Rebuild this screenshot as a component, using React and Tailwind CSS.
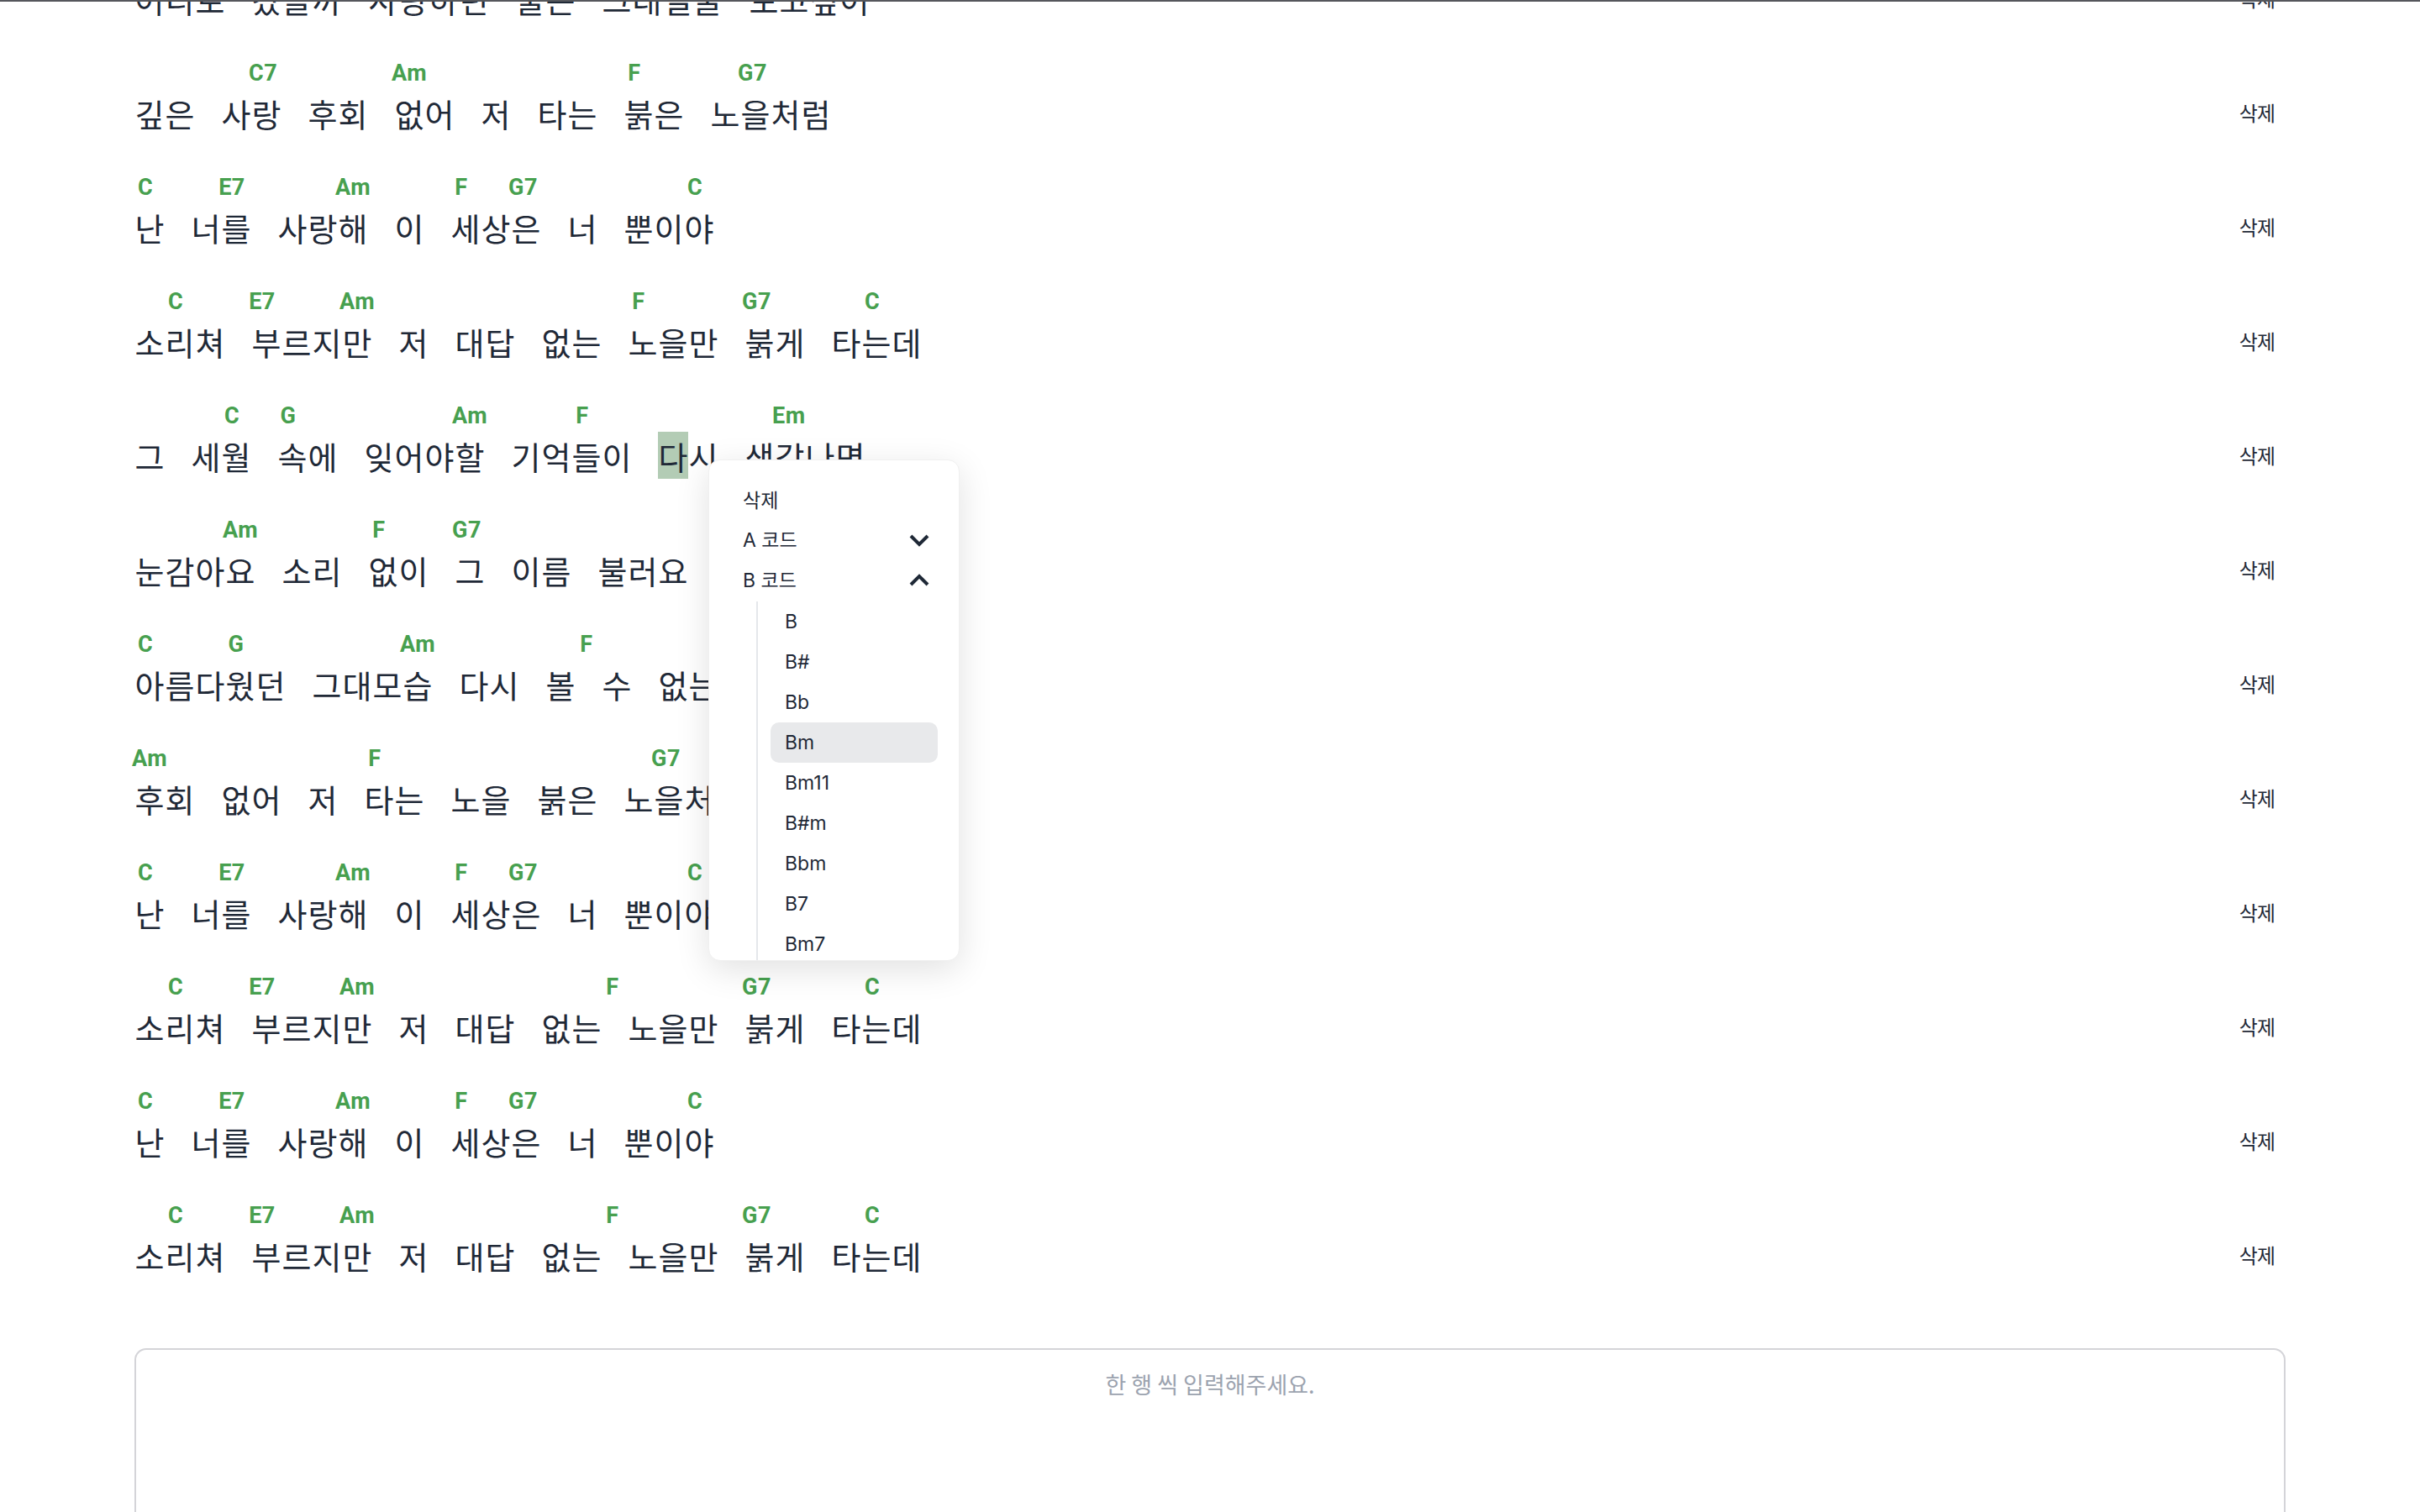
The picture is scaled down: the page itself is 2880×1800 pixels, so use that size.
import React from 'react';

// [X] = chord over the next char (spaces count), ^ = selected char
const LINES = [
  '어디로 갔을까 사랑하던 물든 그대얼굴 보고싶어',
  '깊은 사[C7]랑 후회 [Am]없어 저 타는 [F]붉은 노[G7]을처럼',
  '[C]난 너[E7]를 사랑[Am]해 이 [F]세상[G7]은 너 뿐이[C]야',
  '소[C]리쳐 [E7]부르지[Am]만 저 대답 없는 [F]노을만 [G7]붉게 타[C]는데',
  '그 세[C]월 [G]속에 잊어야[Am]할 기억[F]들이 ^다시 생[Em]각나면',
  '눈감아[Am]요 소리 [F]없이 [G7]그 이름 불러요',
  '[C]아름다[G]웠던 그대모[Am]습 다시 볼[F] 수 없는데',
  '[Am]후회 없어 저 [F]타는 노을 붉은 노[G7]을처럼',
  '[C]난 너[E7]를 사랑[Am]해 이 [F]세상[G7]은 너 뿐이[C]야',
  '소[C]리쳐 [E7]부르지[Am]만 저 대답 없는[F] 노을만 [G7]붉게 타[C]는데',
  '[C]난 너[E7]를 사랑[Am]해 이 [F]세상[G7]은 너 뿐이[C]야',
  '소[C]리쳐 [E7]부르지[Am]만 저 대답 없는[F] 노을만 [G7]붉게 타[C]는데',
];

const B_CHORDS = ['B', 'B#', 'Bb', 'Bm', 'Bm11', 'B#m', 'Bbm', 'B7', 'Bm7', 'Bm7b5', 'Bsus4'];

const parseLine = (line) => {
  const tokens = [];
  let chord = null;
  let selected = false;
  for (let i = 0; i < line.length; i++) {
    const ch = line[i];
    if (ch === '[') {
      const end = line.indexOf(']', i);
      chord = line.slice(i + 1, end);
      i = end;
    } else if (ch === '^') {
      selected = true;
    } else {
      tokens.push({ ch, chord, selected });
      chord = null;
      selected = false;
    }
  }
  return tokens;
};

const Token = ({ token }) => {
  const isSpace = token.ch === ' ';
  return (
    <div className={`flex flex-col ${isSpace ? 'w-[31px]' : 'w-[36px]'}`}>
      <div className="h-[38px] w-[32px] -ml-[3px] flex [justify-content:safe_center] whitespace-nowrap text-[27px] tracking-[0.5px] leading-[38px] font-bold text-[#47a04f] font-['Roboto',sans-serif]">
        {token.chord && <span>{token.chord}</span>}
      </div>
      <div
        className={`h-[56px] flex items-center justify-center text-[38px] text-[#1f2937] ${
          token.selected ? 'bg-[#b3ccb5]' : ''
        }`}
      >
        {isSpace ? '' : token.ch}
      </div>
    </div>
  );
};

const LyricRow = ({ line }) => {
  const tokens = parseLine(line);
  return (
    <div className="flex items-end justify-between pt-[22px] pb-[20px]">
      <div className="flex">
        {tokens.map((t, idx) => (
          <Token key={idx} token={t} />
        ))}
      </div>
      <button className="h-[56px] flex items-center px-[13px] text-[24px] tracking-[-1px] text-[#1f2937]">
        삭제
      </button>
    </div>
  );
};

const Chevron = ({ up }) => (
  <svg width="26" height="16" viewBox="0 0 26 16" fill="none" stroke="#1f2937" strokeWidth="4" strokeLinecap="butt" strokeLinejoin="miter">
    {up ? <path d="M3 13 L13 3 L23 13" /> : <path d="M3 3 L13 13 L23 3" />}
  </svg>
);

const ChordMenu = () => (
  <div className="absolute left-[843px] top-[547px] z-10 w-[299px] h-[597px] overflow-hidden rounded-[14px] border border-[#f0f0f0] bg-white shadow-[0_10px_40px_rgba(0,0,0,0.12)] pt-[22px] font-['Inter','Noto_Sans_CJK_KR',sans-serif] text-[#1f2937]">
    <div className="h-[48px] flex items-center pl-[40px] text-[23px] font-['Noto_Sans_CJK_KR',sans-serif]">삭제</div>
    <div className="mt-[1px] h-[48px] flex items-center justify-between pl-[40px] pr-[34px] text-[23px]">
      <span>A 코드</span>
      <Chevron />
    </div>
    <div className="h-[48px] flex items-center justify-between pl-[40px] pr-[34px] text-[23px]">
      <span>B 코드</span>
      <Chevron up />
    </div>
    <div className="ml-[56px] mt-[1px] border-l-2 border-[#e5e7eb] pl-[15px]">
      {B_CHORDS.map((c) => (
        <div
          key={c}
          className={`w-[199px] h-[48px] flex items-center px-[17px] rounded-[10px] text-[23px] ${
            c === 'Bm' ? 'bg-[#e8e9eb]' : ''
          }`}
        >
          {c}
        </div>
      ))}
    </div>
  </div>
);

export default function App() {
  return (
    <div className="relative h-[1800px] overflow-hidden bg-white font-['Noto_Sans_CJK_KR','Noto_Sans',sans-serif]">
      <div className="absolute top-0 inset-x-0 h-[2px] bg-[#55575c] z-20" />
      <div className="px-[160px]">
        <div className="mt-[-90px]">
          {LINES.map((line, idx) => (
            <LyricRow key={idx} line={line} />
          ))}
        </div>
        <textarea
          className="mt-[63px] block w-full h-[320px] resize-none rounded-[14px] border-2 border-[#d4d4d8] pt-[23px] text-center text-[27px] leading-[36px] placeholder:text-[#9ca3af] outline-none"
          placeholder="한 행 씩 입력해주세요."
        />
      </div>
      <ChordMenu />
    </div>
  );
}
